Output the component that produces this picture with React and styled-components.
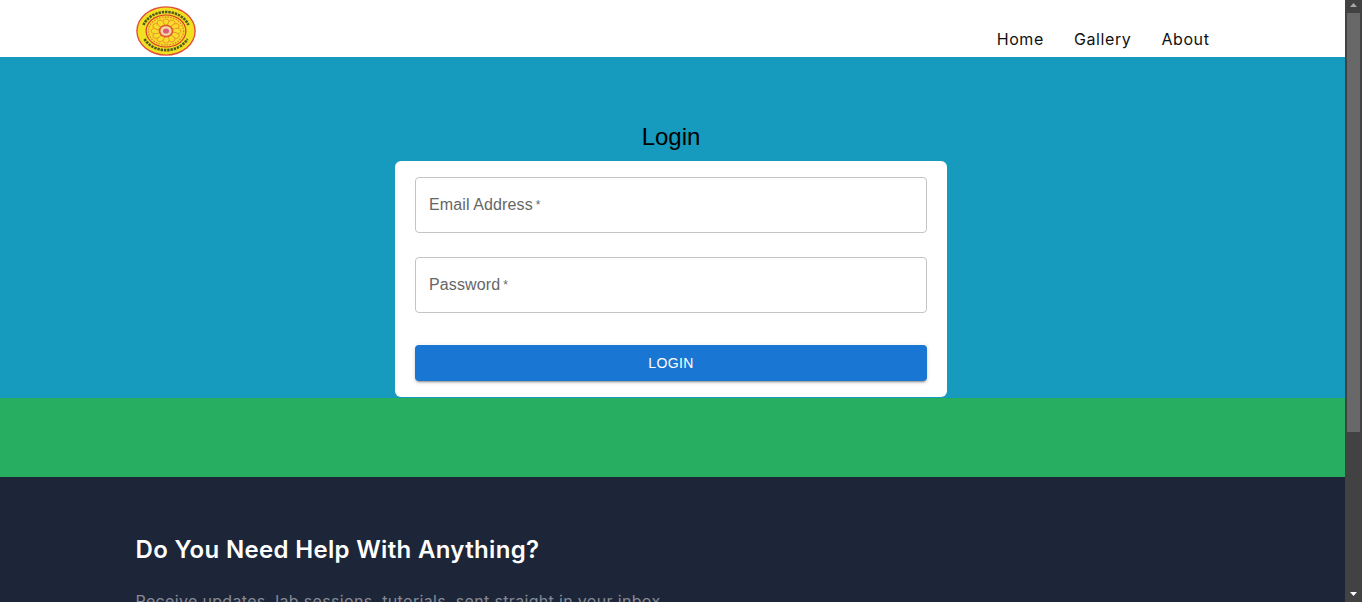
import React from "react";
import styled, { createGlobalStyle } from "styled-components";

const GlobalStyle = createGlobalStyle`
  html {
    overflow: hidden;
  }
  body {
    margin: 0;
    padding-right: 17px;
    background: #fff;
    font-family: "Liberation Sans", Arial, sans-serif;
  }
`;

const Scrollbar = styled.div`
  position: fixed;
  top: 0;
  right: 0;
  bottom: 0;
  width: 17px;
  background: #424242;
  display: flex;
  flex-direction: column;
`;

const ScrollArrow = styled.svg`
  flex: none;
  display: block;
  width: 17px;
  height: ${(props) => props.$size}px;
`;

const ScrollTrack = styled.div`
  flex: 1;
  padding-left: 2px;
`;

const ScrollThumb = styled.div`
  width: 13px;
  height: 419px;
  background: #686868;
`;

const Header = styled.header`
  height: 57px;
  background: #fff;
`;

const HeaderInner = styled.div`
  width: 1074px;
  height: 100%;
  margin: 0 auto;
  display: flex;
  justify-content: space-between;
  align-items: flex-end;
`;

const Logo = styled.svg`
  display: block;
  width: 60px;
  height: 50px;
  margin-bottom: 1px;
`;

const Nav = styled.nav`
  display: flex;
  gap: 30px;
  padding-bottom: 7px;
`;

const NavLink = styled.a`
  font-family: "Inter", "Open Sans", sans-serif;
  font-size: 16px;
  line-height: 22px;
  color: #111;
  letter-spacing: 0.6px;
  text-decoration: none;
`;

const Hero = styled.section`
  height: 341px;
  box-sizing: border-box;
  padding-right: 3px;
  background: #169abd;
  display: flex;
  flex-direction: column;
  align-items: center;
`;

const Title = styled.h1`
  margin: 66px 0 10px;
  font-size: 24px;
  line-height: 28px;
  font-weight: 400;
  color: #000;
`;

const Card = styled.form`
  width: 552px;
  height: 236px;
  box-sizing: border-box;
  padding: 16px 20px;
  background: #fff;
  border-radius: 6px;
  display: flex;
  flex-direction: column;
`;

const Field = styled.div`
  height: 56px;
  box-sizing: border-box;
  margin-bottom: 24px;
  padding: 0 13px;
  display: flex;
  align-items: center;
  border: 1px solid #c4c4c4;
  border-radius: 4px;
  font-size: 16px;
  letter-spacing: 0.12px;
  color: #666;
`;

const Required = styled.span`
  margin-left: 3px;
  font-size: 12px;
`;

const Submit = styled.button`
  height: 36px;
  margin-top: 8px;
  border: 0;
  border-radius: 4px;
  background: #1976d2;
  color: #fff;
  font-family: "Liberation Sans", Arial, sans-serif;
  font-size: 14px;
  font-weight: 400;
  letter-spacing: 0.4px;
  box-shadow: 0 3px 1px -2px rgba(0, 0, 0, 0.2), 0 2px 2px rgba(0, 0, 0, 0.14),
    0 1px 5px rgba(0, 0, 0, 0.12);
`;

const GreenBand = styled.div`
  height: 79px;
  background: #27ae60;
`;

const Footer = styled.footer`
  height: 347px;
  background: #1d2638;
`;

const FooterInner = styled.div`
  width: 1074px;
  margin: 0 auto;
  padding-top: 56px;
`;

const FooterTitle = styled.h2`
  margin: 0 0 22px;
  font-family: "Inter", "Open Sans", sans-serif;
  font-size: 24px;
  line-height: 34px;
  font-weight: 600;
  letter-spacing: 0.33px;
  color: #fff;
`;

const FooterText = styled.p`
  margin: 0;
  font-family: "Inter", "Open Sans", sans-serif;
  font-size: 16px;
  line-height: 24px;
  letter-spacing: 0.33px;
  color: #858a96;
`;

const petals = Array.from({ length: 12 }, (_, i) => (i * 360) / 12);

const LogoMark = () => (
  <Logo viewBox="0 0 60 50" aria-label="logo">
    <defs>
      <filter id="soft" x="-5%" y="-5%" width="110%" height="110%">
        <feGaussianBlur stdDeviation="0.35" />
      </filter>
    </defs>
    <g filter="url(#soft)">
      <ellipse cx="30" cy="25" rx="29.8" ry="24.8" fill="#e0503a" />
      <ellipse cx="30" cy="25" rx="28.4" ry="23.4" fill="#f2e020" />
      <path d="M7.5 19 A 24 20 0 0 1 52.5 19" fill="none" stroke="#4f5a22" strokeWidth="2.6" strokeDasharray="2.4 0.9" />
      <path d="M8.5 33 A 24 20 0 0 0 51.5 33" fill="none" stroke="#4f5a22" strokeWidth="2.6" strokeDasharray="2.4 0.9" />
      <ellipse cx="30" cy="25" rx="20.5" ry="16.5" fill="#d8352c" />
      <ellipse cx="30" cy="25" rx="19.3" ry="15.4" fill="#f5dc2a" />
      <ellipse cx="30" cy="25" rx="17.6" ry="14" fill="none" stroke="#e8872a" strokeWidth="1.4" strokeDasharray="1.6 1.2" />
      <g transform="translate(30 25) scale(1 0.82) translate(-30 -25)">
        {petals.map((a) => (
          <ellipse
            key={a}
            cx="30"
            cy="14.5"
            rx="3.2"
            ry="4.4"
            fill="#f7dc2c"
            stroke="#e88a2a"
            strokeWidth="0.9"
            transform={`rotate(${a} 30 25)`}
          />
        ))}
      </g>
      <ellipse cx="30" cy="25" rx="7.4" ry="6.4" fill="#e05a30" />
      <ellipse cx="30" cy="25" rx="5.6" ry="4.8" fill="#f3d8a0" />
      <ellipse cx="30" cy="25" rx="3" ry="2.6" fill="#dc5a82" />
    </g>
  </Logo>
);

export default function App() {
  return (
    <>
      <GlobalStyle />
      <Header>
        <HeaderInner>
          <LogoMark />
          <Nav>
            <NavLink href="#">Home</NavLink>
            <NavLink href="#">Gallery</NavLink>
            <NavLink href="#">About</NavLink>
          </Nav>
        </HeaderInner>
      </Header>
      <Hero>
        <Title>Login</Title>
        <Card>
          <Field>
            Email Address<Required>*</Required>
          </Field>
          <Field>
            Password<Required>*</Required>
          </Field>
          <Submit type="button">LOGIN</Submit>
        </Card>
      </Hero>
      <GreenBand />
      <Footer>
        <FooterInner>
          <FooterTitle>Do You Need Help With Anything?</FooterTitle>
          <FooterText>Receive updates, lab sessions, tutorials, sent straight in your inbox</FooterText>
        </FooterInner>
      </Footer>
      <Scrollbar>
        <ScrollArrow $size={13} viewBox="0 0 17 13">
          <path d="M5 7 L8.5 3 L12 7 Z" fill="#a8a8a8" />
        </ScrollArrow>
        <ScrollTrack>
          <ScrollThumb />
        </ScrollTrack>
        <ScrollArrow $size={17} viewBox="0 0 17 17">
          <path d="M5 7 L12 7 L8.5 11 Z" fill="#fff" />
        </ScrollArrow>
      </Scrollbar>
    </>
  );
}
